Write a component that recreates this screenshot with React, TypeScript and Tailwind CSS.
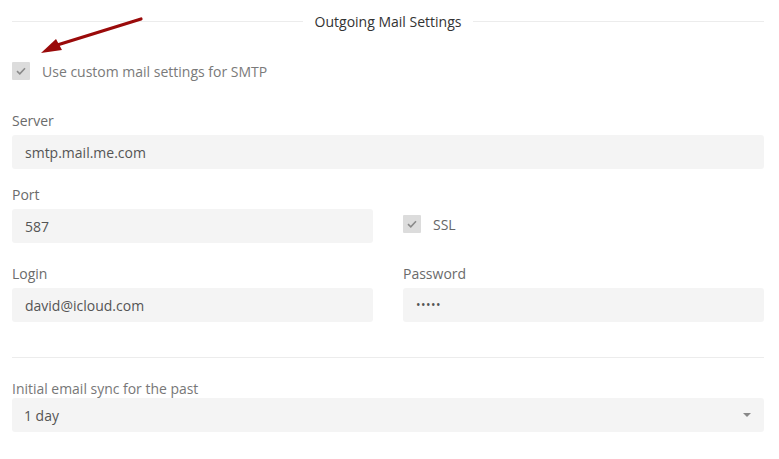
import React from "react";

function Check() {
  return (
    <span className="flex h-[18px] w-[18px] items-center justify-center rounded-[1px] bg-[#dcdcdc]">
      <svg width="10" height="8" viewBox="0 0 10 8">
        <path d="M1 4.2 L3.8 6.8 L9 1.2" fill="none" stroke="#8a8a8a" strokeWidth="1.6" />
      </svg>
    </span>
  );
}

function Field({ label, value }: { label: string; value: string }) {
  return (
    <div className="flex flex-col">
      <div className="mb-1 text-[14px] leading-5 text-[#6b6b6b]">{label}</div>
      <div className="flex h-[34px] items-center rounded-[3px] bg-[#f4f4f4] px-[13px] text-[14px] text-[#555]">
        {value}
      </div>
    </div>
  );
}

export default function App() {
  return (
    <div
      className="relative h-[459px] w-[779px] bg-white pl-3 pr-[15px]"
      style={{ fontFamily: '"Open Sans", "Noto Sans", sans-serif' }}
    >
      <svg className="absolute left-0 top-0" width="200" height="70" viewBox="0 0 200 70">
        <line x1="141" y1="19" x2="54" y2="46" stroke="#9a0a0a" strokeWidth="3.2" strokeLinecap="round" />
        <polygon points="41,53 56,39 62,50" fill="#9a0a0a" />
      </svg>

      <div className="flex h-[42px] items-center gap-3">
        <div className="h-px flex-1 bg-[#ececec]" />
        <div className="text-[14px] text-[#333]">Outgoing Mail Settings</div>
        <div className="h-px flex-1 bg-[#ececec]" />
      </div>

      <div className="mt-5 flex h-[18px] items-center gap-3">
        <Check />
        <span className="text-[14px] text-[#7a7a7a]">Use custom mail settings for SMTP</span>
      </div>

      <div className="mt-[31px]">
        <Field label="Server" value="smtp.mail.me.com" />
      </div>

      <div className="mt-4 grid grid-cols-2 gap-[30px]">
        <Field label="Port" value="587" />
        <div className="mt-[30px] flex h-[18px] items-center gap-3">
          <Check />
          <span className="text-[14px] text-[#666]">SSL</span>
        </div>
      </div>

      <div className="mt-[21px] grid grid-cols-2 gap-[30px]">
        <Field label="Login" value="david@icloud.com" />
        <div className="flex flex-col">
          <div className="mb-1 text-[14px] leading-5 text-[#6b6b6b]">Password</div>
          <div className="flex h-[34px] items-center rounded-[3px] bg-[#f4f4f4] px-[13px] text-[12px] tracking-[0.5px] text-[#555]">
            •••••
          </div>
        </div>
      </div>

      <div className="mt-[35px] h-px bg-[#ececec]" />

      <div className="mt-5 origin-left scale-x-[0.93] whitespace-nowrap text-[15px] leading-5 text-[#777]">
        Initial email sync for the past
      </div>
      <div className="flex h-[34px] items-center justify-between rounded-[3px] bg-[#f4f4f4] pl-[12px] pr-[13px]">
        <span className="origin-left scale-x-[0.93] text-[15px] text-[#555]">1 day</span>
        <svg width="8" height="4" viewBox="0 0 8 4">
          <polygon points="0,0 8,0 4,4" fill="#888" />
        </svg>
      </div>
    </div>
  );
}
